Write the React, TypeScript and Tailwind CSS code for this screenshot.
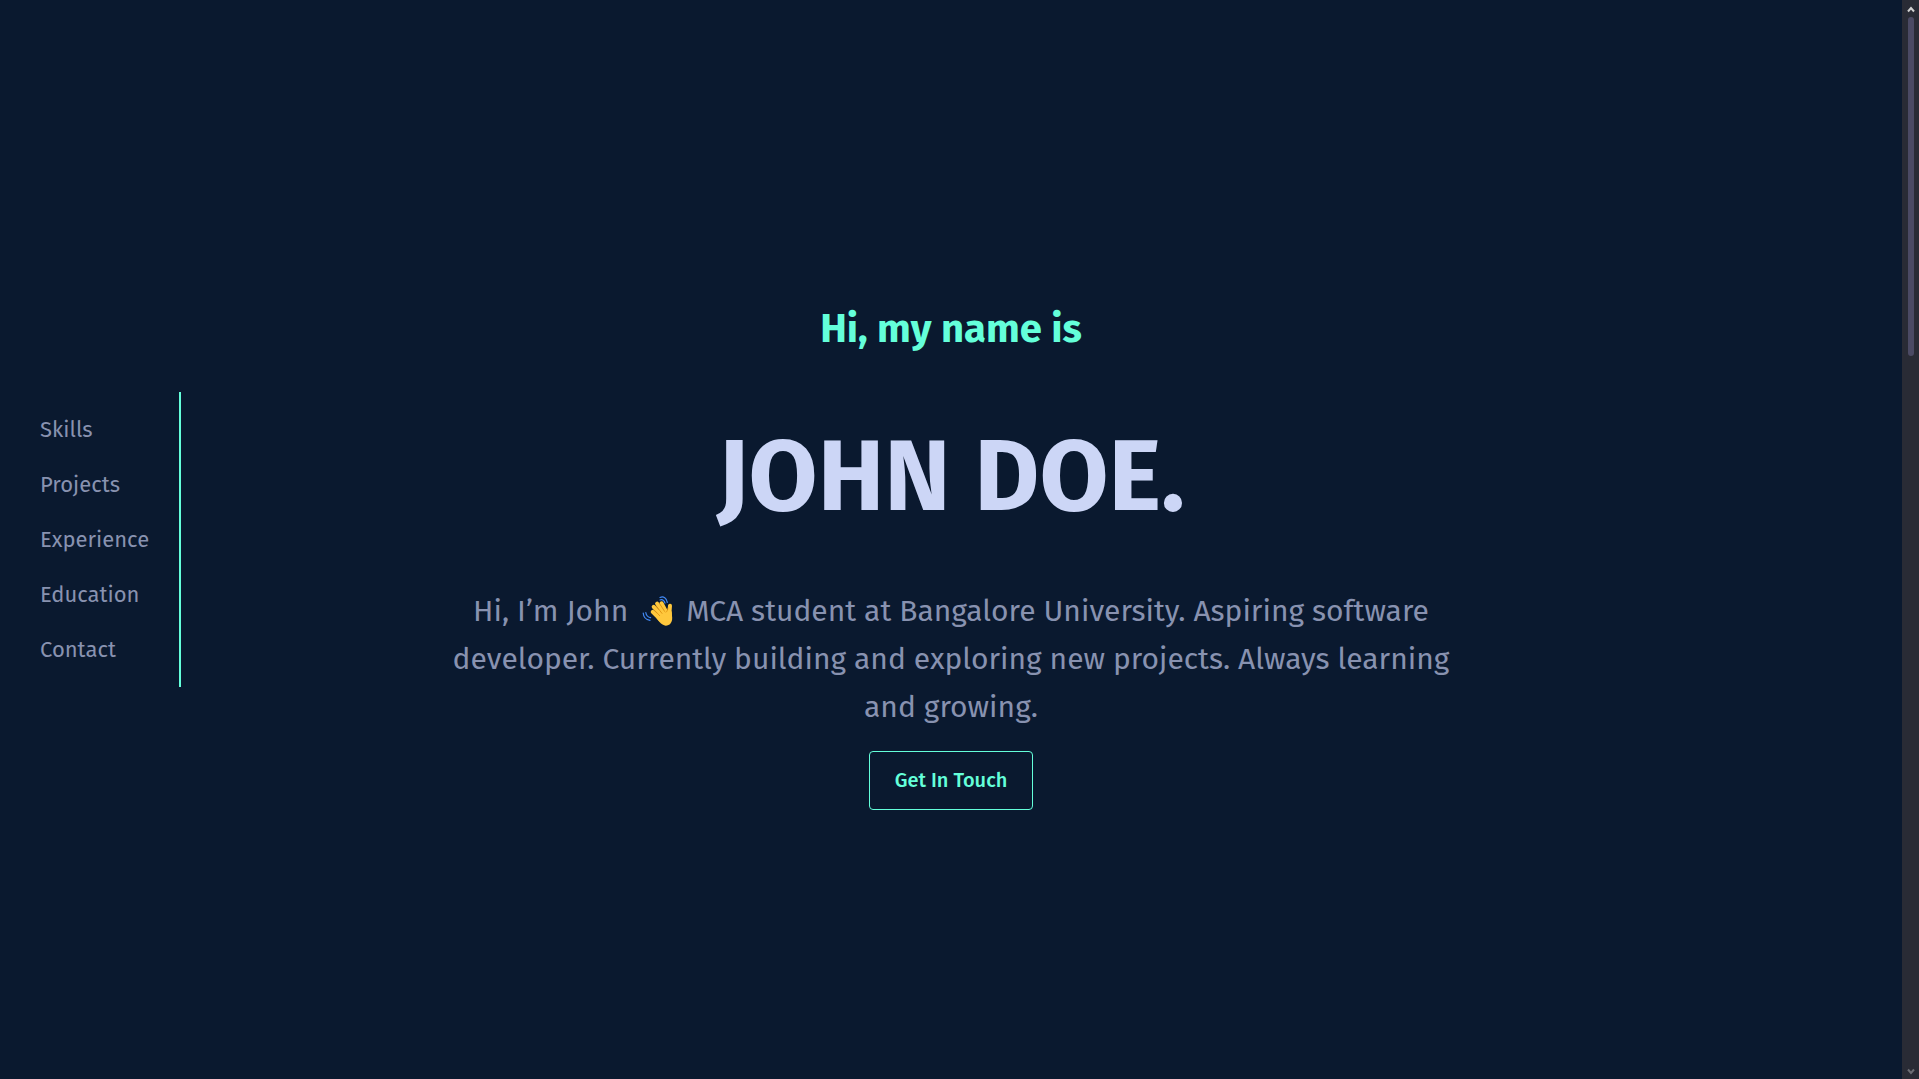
const links = ["Skills", "Projects", "Experience", "Education", "Contact"];

function WavingHand() {
  return (
    <svg
      role="img"
      aria-label="Waving hand"
      viewBox="-1 4 42 36"
      className="inline-block h-9 w-[42px] align-middle"
      fill="none"
      strokeLinecap="round"
      strokeLinejoin="round"
    >
      <g stroke="#4289f5" strokeWidth="1.2">
        <path d="M23 6.500c3.600-1.600 6.600.6 7.300 4.800" />
        <path d="M23 9c2.600-.9 4.300.5 5 3.200" />
        <path d="M6.200 22c.3 4 2.600 6.800 6.800 7.300" />
        <path d="M8.800 21.500c.4 2.800 2 4.700 4.800 5.200" />
      </g>
      <g stroke="#ffc83d" strokeWidth="4">
        <path d="M15.700 20.800l8.300 8.200" />
        <path d="M16.700 15.800l9.300 10.200" />
        <path d="M20.100 12.700l7.900 11.300" />
        <path d="M24.500 12.300l6 11.200" />
        <path d="M33 14.700c-.5 3-.5 6 0 11" />
      </g>
      <path
        d="M18 24.500c2 4 6.500 10 10.700 10.200 4 0 6.600-3.400 6.500-7.700l-.6-6.500-6-2.500-6 .5z"
        fill="#ffc83d"
      />
      <g stroke="#d98a0b" strokeWidth=".8">
        <path d="M17.700 19.500l5 5.200" />
        <path d="M19.300 15.100l5.700 7.300" />
        <path d="M22.900 13.100l4.700 7.300" />
        <path d="M30.900 17c-.3 1.800-.5 3-1.800 4.200" />
      </g>
    </svg>
  );
}

function ScrollRail() {
  return (
    <div
      aria-hidden="true"
      className="flex w-[17px] shrink-0 flex-col items-center gap-1 bg-[#292b35] pt-1.5 pb-1 pl-px text-[#d0d0d0]"
    >
      <svg viewBox="0 0 8 7" className="h-[7px] w-2" fill="none" stroke="currentColor" strokeWidth="2">
        <path d="M1 5.500L4 2l3 3.500" />
      </svg>
      <div className="w-full flex-1">
        <div className="mx-auto h-[32.4%] w-1.5 rounded-full bg-[#4b4a64]" />
      </div>
      <svg viewBox="0 0 8 7" className="h-[7px] w-2 text-[#6d6e75]" fill="none" stroke="currentColor" strokeWidth="2">
        <path d="M1 1.500L4 5l3-3.500" />
      </svg>
    </div>
  );
}

export default function App() {
  return (
    <div className="flex min-h-screen bg-[#0a192f] font-['Fira_Sans','Noto_Sans',sans-serif] text-[#8892b0]">
      <div className="relative flex flex-1 items-center justify-center">
        <nav
          aria-label="Sections"
          className="absolute left-0 flex flex-col border-r-2 border-[#64ffda] py-2.5 pr-[30px] pl-10"
        >
          {links.map((label) => (
            <a key={label} href={`#${label.toLowerCase()}`} className="text-[22px] leading-[55px]">
              {label}
            </a>
          ))}
        </nav>

        <main className="flex max-w-[1000px] flex-col items-center pt-9 text-center">
          <h2 className="text-[40px] leading-[48px] font-bold text-[#64ffda]">Hi, my name is</h2>
          <h1 className="mt-16 text-[100px] leading-[120px] font-bold text-[#ccd6f6]">JOHN DOE.</h1>
          <p className="mt-[50px] text-[30px] leading-[48px]">
            Hi, I’m John <WavingHand /> MCA student at Bangalore University. Aspiring software
            developer. Currently building and exploring new projects. Always learning and growing.
          </p>
          <button
            type="button"
            className="mt-5 rounded border border-[#64ffda] px-[25px] py-4 text-xl leading-[25px] font-medium text-[#64ffda]"
          >
            Get In Touch
          </button>
        </main>
      </div>
      <ScrollRail />
    </div>
  );
}
